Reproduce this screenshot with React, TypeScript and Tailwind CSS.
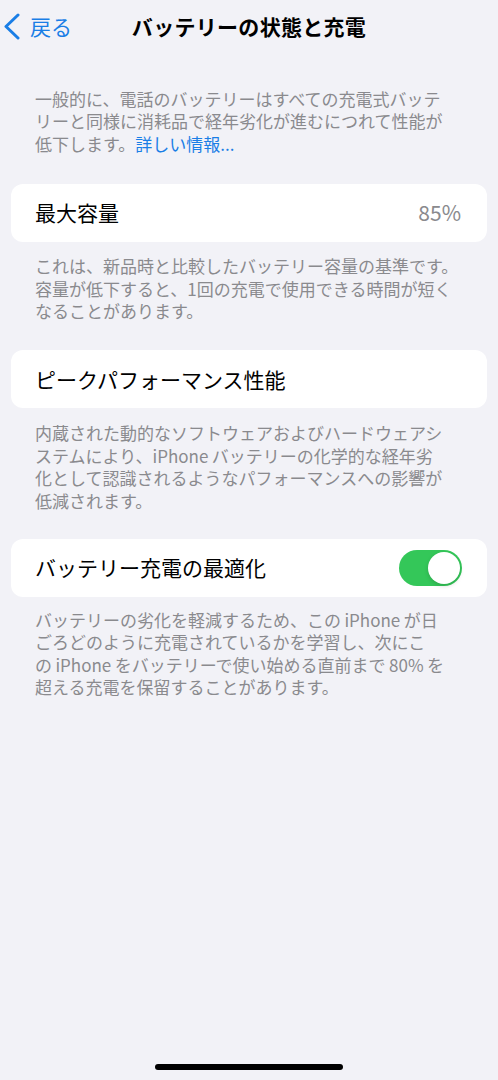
import React, { useState } from 'react'

const font = { fontFamily: '"Noto Sans CJK JP", "Noto Sans", sans-serif' }

function Lines({ lines }: { lines: React.ReactNode[] }) {
  return (
    <div className="px-[35px] text-[17px] text-[#8a8a8e] whitespace-nowrap">
      {lines.map((l, i) => (
        <p key={i} className="h-[22.4px] leading-[22.4px]">
          {l}
        </p>
      ))}
    </div>
  )
}

function Toggle({ on, onChange }: { on: boolean; onChange: () => void }) {
  return (
    <button
      onClick={onChange}
      className={`relative h-[36px] w-[63px] rounded-full transition-colors ${on ? 'bg-[#34c759]' : 'bg-[#e5e5ea]'}`}
      aria-label="バッテリー充電の最適化"
    >
      <span
        className={`absolute top-[2px] h-[32px] w-[32px] rounded-full bg-white shadow-[0_2px_4px_rgba(0,0,0,0.15)] transition-all ${on ? 'left-[29px]' : 'left-[2px]'}`}
      />
    </button>
  )
}

export default function App() {
  const [optimized, setOptimized] = useState(true)

  return (
    <div className="flex min-h-[1080px] w-full flex-col bg-[#f2f2f7] text-black" style={font}>
      {/* Nav bar */}
      <header className="grid h-[52px] grid-cols-[1fr_auto_1fr] items-center">
        <button className="flex items-center gap-[10px] pl-[3px] text-[#1a7ee6]">
          <svg width="17" height="27" viewBox="0 0 17 27" fill="none">
            <path d="M15 2 L3 13.5 L15 25" stroke="currentColor" strokeWidth="3" strokeLinecap="round" strokeLinejoin="round" />
          </svg>
          <span className="text-[21px] leading-none">戻る</span>
        </button>
        <h1 className="text-[21px] font-bold leading-none tracking-[0.3px]">バッテリーの状態と充電</h1>
        <div />
      </header>

      <div className="mt-[36px]">
        <Lines
          lines={[
            '一般的に、電話のバッテリーはすべての充電式バッテ',
            'リーと同様に消耗品で経年劣化が進むにつれて性能が',
            <>
              低下します。<span className="text-[#1a7ee6]">詳しい情報...</span>
            </>,
          ]}
        />
      </div>

      {/* Maximum capacity */}
      <section className="mx-[11px] mt-[29px] flex h-[58px] items-center justify-between rounded-[12px] bg-white pl-[24px] pr-[26px]">
        <span className="text-[21px]">最大容量</span>
        <span className="text-[21px] text-[#8a8a8e]">85%</span>
      </section>
      <div className="mt-[13px]">
        <Lines
          lines={[
            'これは、新品時と比較したバッテリー容量の基準です。',
            '容量が低下すると、1回の充電で使用できる時間が短く',
            'なることがあります。',
          ]}
        />
      </div>

      {/* Peak performance */}
      <section className="mx-[11px] mt-[28px] flex h-[58px] items-center rounded-[12px] bg-white pl-[24px] pr-[26px]">
        <span className="text-[21px]">ピークパフォーマンス性能</span>
      </section>
      <div className="mt-[14px]">
        <Lines
          lines={[
            '内蔵された動的なソフトウェアおよびハードウェアシ',
            'ステムにより、iPhone\u2009バッテリーの化学的な経年劣',
            '化として認識されるようなパフォーマンスへの影響が',
            '低減されます。',
          ]}
        />
      </div>

      {/* Optimized charging */}
      <section className="mx-[11px] mt-[27px] flex h-[58px] items-center justify-between rounded-[12px] bg-white pl-[24px] pr-[25px]">
        <span className="text-[21px]">バッテリー充電の最適化</span>
        <Toggle on={optimized} onChange={() => setOptimized(!optimized)} />
      </section>
      <div className="mt-[12px]">
        <Lines
          lines={[
            'バッテリーの劣化を軽減するため、この\u2009iPhone\u2009が日',
            'ごろどのように充電されているかを学習し、次にこ',
            'の\u2009iPhone\u2009をバッテリーで使い始める直前まで\u200980%\u2009を',
            '超える充電を保留することがあります。',
          ]}
        />
      </div>

      <div className="flex-1" />
      {/* Home indicator */}
      <div className="mb-[10px] flex justify-center">
        <div className="h-[6px] w-[188px] rounded-full bg-black" />
      </div>
    </div>
  )
}
